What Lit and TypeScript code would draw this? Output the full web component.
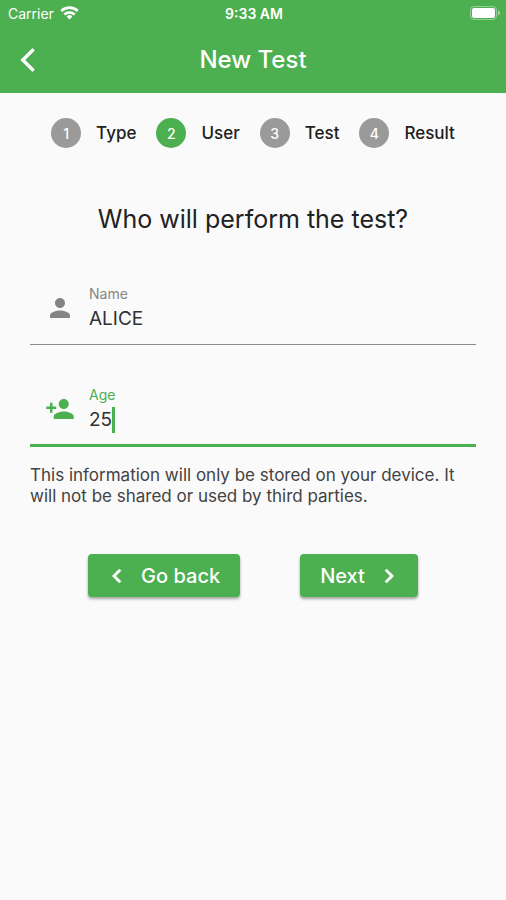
import { LitElement, html, svg, css } from "lit";
import { customElement, state } from "lit/decorators.js";
import { classMap } from "lit/directives/class-map.js";

const PERSON =
  "M12 12c2.21 0 4-1.79 4-4s-1.79-4-4-4-4 1.79-4 4 1.79 4 4 4zm0 2c-2.67 0-8 1.34-8 4v2h16v-2c0-2.66-5.33-4-8-4z";
const PERSON_ADD =
  "M15 12c2.21 0 4-1.79 4-4s-1.79-4-4-4-4 1.79-4 4 1.79 4 4 4zm-9-2V7H4v3H1v2h3v3h2v-3h3v-2H6zm9 4c-2.67 0-8 1.34-8 4v2h16v-2c0-2.66-5.33-4-8-4z";
const CHEVRON_LEFT = "M15.41 7.41L14 6l-6 6 6 6 1.41-1.41L10.83 12z";
const CHEVRON_RIGHT = "M10 6L8.59 7.41 13.17 12l-4.58 4.59L10 18l6-6z";

const icon = (path: string) => html`
  <svg class="icon" viewBox="0 0 24 24" aria-hidden="true">${svg`<path d=${path} fill="currentColor" />`}</svg>
`;

@customElement("app-root")
export class AppRoot extends LitElement {
  @state() private step = 2;
  @state() private name = "ALICE";
  @state() private age = "25";

  static styles = css`
    :host {
      display: block;
      min-height: 100vh;
      background: #fafafa;
      color: #212121;
      font-family: Inter, Roboto, "Liberation Sans", sans-serif;
    }
    * {
      box-sizing: border-box;
    }
    svg {
      display: block;
      flex: none;
    }
    header {
      background: #4caf50;
      color: #fff;
    }
    .status {
      display: grid;
      grid-template-columns: 1fr auto 1fr;
      align-items: center;
      height: 26px;
      padding: 0 6px 0 8px;
      font-size: 14px;
    }
    .carrier {
      display: flex;
      align-items: center;
      gap: 6px;
    }
    .clock {
      font-weight: 600;
    }
    .battery {
      justify-self: end;
    }
    .bar {
      display: grid;
      grid-template-columns: 48px 1fr 48px;
      align-items: center;
      height: 67px;
      padding: 0 4px;
    }
    .back {
      display: grid;
      place-items: center;
      height: 48px;
      padding: 0;
      border: 0;
      background: none;
      color: inherit;
    }
    h1 {
      margin: 0;
      text-align: center;
      font-size: 24px;
      line-height: 32px;
      font-weight: 500;
    }
    main {
      padding: 25px 30px;
    }
    .steps {
      display: flex;
      justify-content: center;
      gap: 20px;
      margin: 0;
      padding: 0;
      list-style: none;
      font-size: 17px;
      font-weight: 500;
    }
    .step {
      display: flex;
      align-items: center;
      gap: 15px;
    }
    .dot {
      display: grid;
      place-items: center;
      width: 30px;
      height: 30px;
      border-radius: 50%;
      background: #9a9a9a;
      color: #fff;
      font-size: 14px;
    }
    .current .dot {
      background: #4caf50;
    }
    h2 {
      margin: 55px 0 48px;
      text-align: center;
      font-size: 25px;
      line-height: 32px;
      font-weight: 400;
    }
    .field {
      display: flex;
      align-items: center;
      gap: 14px;
      height: 62px;
      padding: 0 0 12px 15px;
      margin-bottom: 40px;
      border-bottom: 1px solid #8c8c8c;
      color: #858585;
    }
    .field .icon {
      width: 30px;
      height: 30px;
    }
    .field.active {
      border-bottom: 3px solid #4caf50;
      color: #4caf50;
      margin-bottom: 18px;
    }
    .text {
      flex: 1;
      display: flex;
      flex-direction: column;
    }
    label {
      font-size: 14px;
      line-height: 22px;
    }
    .value {
      display: flex;
      align-items: center;
      height: 28px;
    }
    input {
      field-sizing: content;
      padding: 0;
      border: 0;
      outline: 0;
      background: none;
      color: #303030;
      font: inherit;
      font-size: 19px;
      line-height: 28px;
    }
    .caret {
      width: 3px;
      height: 26px;
      background: #4caf50;
    }
    .note {
      margin: 0;
      color: #424242;
      font-size: 17px;
      line-height: 21px;
    }
    .actions {
      display: flex;
      justify-content: center;
      gap: 60px;
      margin-top: 47px;
    }
    .action {
      display: flex;
      align-items: center;
      gap: 15px;
      height: 43px;
      padding: 0 20px;
      border: 0;
      border-radius: 4px;
      background: #4caf50;
      box-shadow: 0 2px 3px rgba(0, 0, 0, 0.35);
      color: #fff;
      font: inherit;
      font-size: 20px;
      font-weight: 500;
    }
    .action .icon {
      width: 28px;
      height: 28px;
      margin: 0 -5px;
      stroke: currentColor;
      stroke-width: 0.5px;
    }
  `;

  render() {
    return html`
      <header>
        <div class="status">
          <span class="carrier">
            Carrier
            <svg width="19" height="14" viewBox="0 0 19 14" fill="none" stroke="#fff" stroke-width="2.6" aria-hidden="true">
              <path d="M1.2 5a12 12 0 0 1 16.6 0" />
              <path d="M4.3 8.5a7.6 7.6 0 0 1 10.4 0" />
              <path d="M9.5 13.4L6.6 10.5a4.2 4.2 0 0 1 5.8 0z" fill="#fff" stroke="none" />
            </svg>
          </span>
          <span class="clock">9:33 AM</span>
          <svg class="battery" width="30" height="14" viewBox="0 0 30 14" aria-hidden="true">
            <rect x="0.5" y="0.5" width="26" height="13" rx="3.5" fill="none" stroke="#fff" stroke-opacity="0.4" />
            <rect x="2" y="2" width="23" height="10" rx="2" fill="#fff" />
            <path d="M28 4.5v5q2-.8 2-2.5t-2-2.5z" fill="#fff" fill-opacity="0.5" />
          </svg>
        </div>
        <div class="bar">
          <button class="back" aria-label="Back">
            <svg width="16" height="24" viewBox="0 0 16 24" fill="none" stroke="#fff" stroke-width="3.4" aria-hidden="true">
              <path d="M13.6 1.2L2.8 12l10.8 10.8" />
            </svg>
          </button>
          <h1>New Test</h1>
        </div>
      </header>
      <main>
        <ol class="steps">
          ${["Type", "User", "Test", "Result"].map(
            (title, i) => html`
              <li class=${classMap({ step: true, current: i + 1 === this.step })}>
                <span class="dot">${i + 1}</span>${title}
              </li>
            `
          )}
        </ol>
        <h2>Who will perform the test?</h2>
        <div class="field">
          ${icon(PERSON)}
          <div class="text">
            <label for="name">Name</label>
            <div class="value">
              <input
                id="name"
                .value=${this.name}
                @input=${(e: Event) => (this.name = (e.target as HTMLInputElement).value)}
              />
            </div>
          </div>
        </div>
        <div class="field active">
          ${icon(PERSON_ADD)}
          <div class="text">
            <label for="age">Age</label>
            <div class="value">
              <input
                id="age"
                inputmode="numeric"
                .value=${this.age}
                @input=${(e: Event) => (this.age = (e.target as HTMLInputElement).value)}
              /><span class="caret"></span>
            </div>
          </div>
        </div>
        <p class="note">
          This information will only be stored on your device. It will not be shared or used by third parties.
        </p>
        <div class="actions">
          <button class="action">${icon(CHEVRON_LEFT)}Go back</button>
          <button class="action">Next${icon(CHEVRON_RIGHT)}</button>
        </div>
      </main>
    `;
  }
}
